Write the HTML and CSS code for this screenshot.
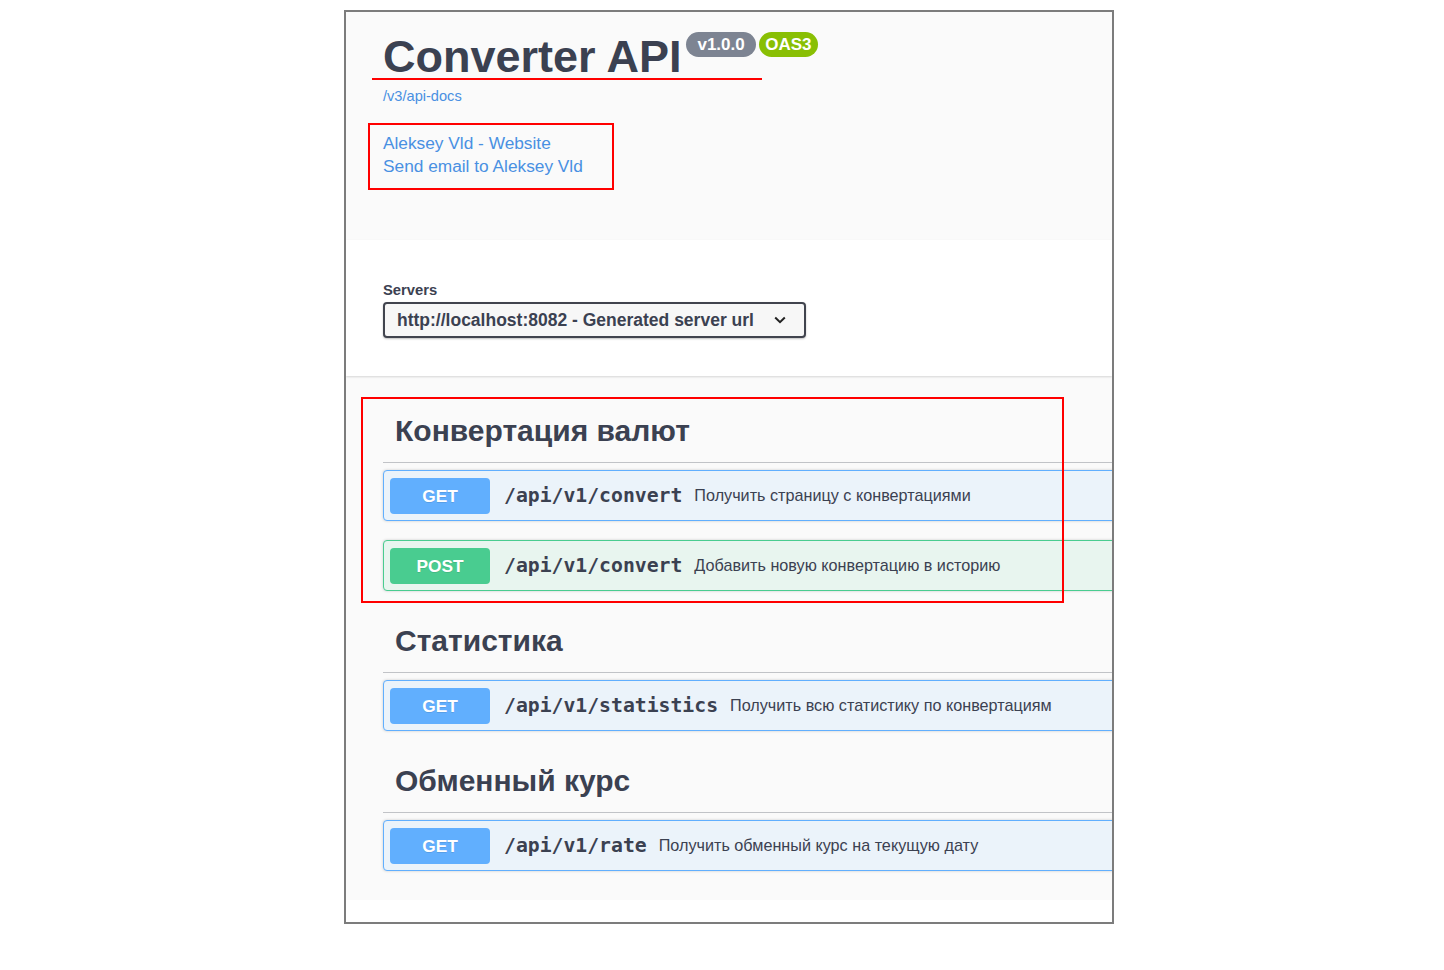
FILE: index.html
```html
<!DOCTYPE html>
<html lang="ru">
<head>
<meta charset="utf-8">
<title>Converter API</title>
<link rel="stylesheet" href="styles.css">
</head>
<body>
<div class="frame">
  <section class="info">
    <div class="title-row">
      <h2 class="title">Converter API</h2>
      <span class="badge badge-version">v1.0.0</span>
      <span class="badge badge-oas">OAS3</span>
    </div>
    <a class="spec-link" href="#">/v3/api-docs</a>
    <div class="contact">
      <a href="#">Aleksey Vld - Website</a>
      <a href="#">Send email to Aleksey Vld</a>
    </div>
  </section>

  <section class="schemes">
    <div class="servers-title">Servers</div>
    <div class="select">
      <span class="select-text">http://localhost:8082 - Generated server url</span>
      <svg class="chevron" width="12" height="8" viewBox="0 0 12 8"><polyline points="1.2,1.5 6,6.2 10.8,1.5" fill="none" stroke="#222" stroke-width="2"/></svg>
    </div>
  </section>

  <section class="ops">
    <div class="tag-section">
      <h3 class="tag">Конвертация валют</h3>
      <div class="opblock get">
        <span class="method">GET</span>
        <span class="path">/api/v1/convert</span>
        <span class="desc">Получить страницу с конвертациями</span>
      </div>
      <div class="opblock post">
        <span class="method">POST</span>
        <span class="path">/api/v1/convert</span>
        <span class="desc">Добавить новую конвертацию в историю</span>
      </div>
    </div>
    <div class="tag-section">
      <h3 class="tag">Статистика</h3>
      <div class="opblock get">
        <span class="method">GET</span>
        <span class="path">/api/v1/statistics</span>
        <span class="desc">Получить всю статистику по конвертациям</span>
      </div>
    </div>
    <div class="tag-section">
      <h3 class="tag">Обменный курс</h3>
      <div class="opblock get">
        <span class="method">GET</span>
        <span class="path">/api/v1/rate</span>
        <span class="desc">Получить обменный курс на текущую дату</span>
      </div>
    </div>
  </section>

  <div class="mark mark-underline"></div>
  <div class="mark mark-contact"></div>
  <div class="mark mark-tag"></div>
</div>
</body>
</html>
```

FILE: styles.css
```css
html, body {
  margin: 0;
  padding: 0;
  background: #ffffff;
}

body {
  font-family: "Liberation Sans", Arial, sans-serif;
  color: #3b4151;
}

.frame {
  position: relative;
  margin: 10px 0 0 344px;
  width: 766px;
  border: 2px solid #7c7c7c;
  background: #ffffff;
  overflow: hidden;
  padding-bottom: 22px;
}

/* ---------- info ---------- */
.info {
  background: #fafafa;
  padding: 23px 37px 0 37px;
  height: 205px;
}

.title-row {
  display: flex;
  align-items: flex-start;
}

.title {
  margin: 0;
  font-size: 45px;
  line-height: 44px;
  font-weight: 700;
  color: #3b4151;
}

.badge {
  display: block;
  height: 25px;
  line-height: 25px;
  margin-top: -3px;
  border-radius: 57px;
  color: #ffffff;
  font-size: 17px;
  font-weight: 700;
}

.badge-version {
  background: #7d8492;
  margin-left: 5px;
  padding: 0 11px;
}

.badge-oas {
  background: #89bf04;
  margin-left: 3px;
  padding: 0 6.5px;
}

.spec-link {
  display: block;
  margin-top: 9px;
  font-size: 14.6px;
  line-height: 17px;
  color: #4990e2;
  text-decoration: none;
  width: max-content;
}

.contact {
  margin-top: 27px;
  display: flex;
  flex-direction: column;
}

.contact a {
  font-size: 17.3px;
  line-height: 23.3px;
  color: #4990e2;
  text-decoration: none;
  width: max-content;
}

/* ---------- servers ---------- */
.schemes {
  background: #ffffff;
  padding: 42px 37px 38px 37px;
  box-shadow: 0 1px 2px 0 rgba(0, 0, 0, 0.15);
  position: relative;
  z-index: 1;
}

.servers-title {
  font-size: 14.8px;
  line-height: 17px;
  font-weight: 700;
  margin-bottom: 3px;
}

.select {
  display: flex;
  align-items: center;
  width: 423px;
  box-sizing: border-box;
  height: 36px;
  padding: 0 0 0 12px;
  border: 2px solid #41444e;
  border-radius: 4px;
  background: #f7f7f7;
  box-shadow: 0 1px 2px 0 rgba(0, 0, 0, 0.25);
}

.select-text {
  font-size: 17.5px;
  line-height: 20px;
  font-weight: 700;
  color: #3b4151;
  white-space: nowrap;
  margin-top: -1px;
}

.chevron {
  margin-left: 20px;
  flex: none;
}

/* ---------- operations ---------- */
.ops {
  background: #fafafa;
  padding: 25px 0 10px 37px;
}

.tag-section {
  margin-right: -30px;
}

.tag {
  margin: 0 0 7px 0;
  padding: 12px 12px 13px 12px;
  font-size: 30px;
  line-height: 36px;
  font-weight: 700;
  color: #3b4151;
  border-bottom: 1px solid #c1c3c7;
}

.tag-section + .tag-section .tag {
  padding-top: 13px;
}

.opblock {
  display: flex;
  align-items: center;
  height: 51px;
  box-sizing: border-box;
  padding: 0 6px;
  margin-bottom: 19px;
  border: 1px solid;
  border-radius: 4px;
  box-shadow: 0 0 3px rgba(0, 0, 0, 0.19);
}

.opblock.get {
  background: #ebf3fa;
  border-color: #61affe;
}

.opblock.post {
  background: #e8f5ef;
  border-color: #49cc90;
}

.method {
  flex: none;
  width: 100px;
  height: 36px;
  line-height: 36px;
  text-align: center;
  border-radius: 4px;
  color: #ffffff;
  font-size: 17.3px;
  font-weight: 700;
  text-shadow: 0 1px 0 rgba(0, 0, 0, 0.1);
}

.get .method {
  background: #61affe;
}

.post .method {
  background: #49cc90;
}

.path {
  padding: 0 12px 0 14px;
  font-family: "DejaVu Sans Mono", monospace;
  font-size: 19.76px;
  font-weight: 700;
  color: #3b4151;
  white-space: nowrap;
}

.desc {
  font-size: 16.2px;
  color: #3b4151;
  white-space: nowrap;
}

/* ---------- red annotations ---------- */
.mark {
  position: absolute;
  box-sizing: border-box;
  pointer-events: none;
}

.mark-underline {
  left: 26px;
  top: 66px;
  width: 390px;
  height: 2px;
  background: #ff0000;
}

.mark-contact {
  left: 22px;
  top: 111px;
  width: 246px;
  height: 67px;
  border: 2px solid #ff0000;
}

.mark-tag {
  left: 15px;
  top: 385px;
  width: 703px;
  height: 206px;
  border: 2px solid #ff0000;
  z-index: 2;
}
```
